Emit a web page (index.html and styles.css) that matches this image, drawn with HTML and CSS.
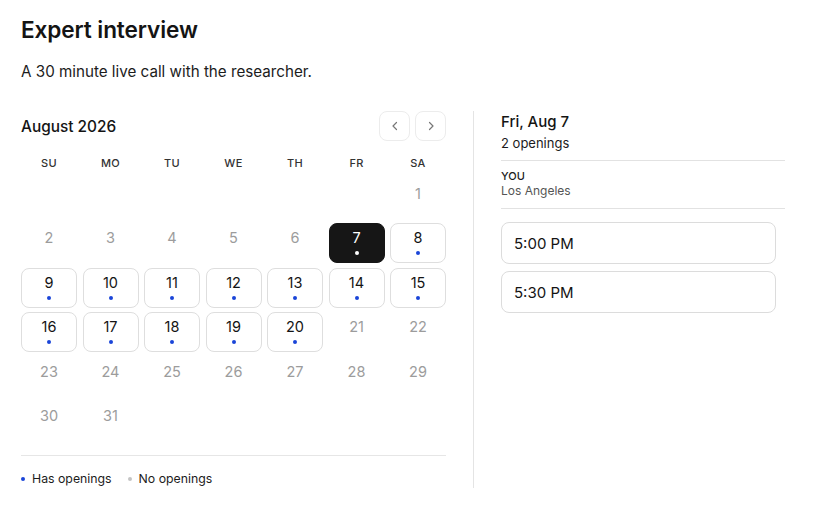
FILE: index.html
```html
<!DOCTYPE html>
<html>
<head>
<meta charset="utf-8">
<link rel="stylesheet" href="styles.css">
</head>
<body>
<div class="page">
  <h1 class="title">Expert interview</h1>
  <p class="subtitle">A 30 minute live call with the researcher.</p>
  <div class="main">
    <section class="cal">
      <div class="cal-head">
        <div class="month">August 2026</div>
        <div class="nav">
          <button class="navbtn" aria-label="Previous month"><svg width="12" height="12" viewBox="0 0 12 12"><path d="M7.5 2.5 4 6l3.5 3.5" fill="none" stroke="#777" stroke-width="1.2" stroke-linecap="round" stroke-linejoin="round"/></svg></button>
          <button class="navbtn" aria-label="Next month"><svg width="12" height="12" viewBox="0 0 12 12"><path d="M4.5 2.5 8 6l-3.5 3.5" fill="none" stroke="#777" stroke-width="1.2" stroke-linecap="round" stroke-linejoin="round"/></svg></button>
        </div>
      </div>
      <div class="weekdays">
        <span>SU</span><span>MO</span><span>TU</span><span>WE</span><span>TH</span><span>FR</span><span>SA</span>
      </div>
      <div class="grid">
        <div class="day empty"></div><div class="day empty"></div><div class="day empty"></div><div class="day empty"></div><div class="day empty"></div><div class="day empty"></div>
        <div class="day off"><span class="n">1</span></div>
        <div class="day off"><span class="n">2</span></div>
        <div class="day off"><span class="n">3</span></div>
        <div class="day off"><span class="n">4</span></div>
        <div class="day off"><span class="n">5</span></div>
        <div class="day off"><span class="n">6</span></div>
        <div class="day open selected"><span class="n">7</span><span class="dot"></span></div>
        <div class="day open"><span class="n">8</span><span class="dot"></span></div>
        <div class="day open"><span class="n">9</span><span class="dot"></span></div>
        <div class="day open"><span class="n">10</span><span class="dot"></span></div>
        <div class="day open"><span class="n">11</span><span class="dot"></span></div>
        <div class="day open"><span class="n">12</span><span class="dot"></span></div>
        <div class="day open"><span class="n">13</span><span class="dot"></span></div>
        <div class="day open"><span class="n">14</span><span class="dot"></span></div>
        <div class="day open"><span class="n">15</span><span class="dot"></span></div>
        <div class="day open"><span class="n">16</span><span class="dot"></span></div>
        <div class="day open"><span class="n">17</span><span class="dot"></span></div>
        <div class="day open"><span class="n">18</span><span class="dot"></span></div>
        <div class="day open"><span class="n">19</span><span class="dot"></span></div>
        <div class="day open"><span class="n">20</span><span class="dot"></span></div>
        <div class="day off"><span class="n">21</span></div>
        <div class="day off"><span class="n">22</span></div>
        <div class="day off"><span class="n">23</span></div>
        <div class="day off"><span class="n">24</span></div>
        <div class="day off"><span class="n">25</span></div>
        <div class="day off"><span class="n">26</span></div>
        <div class="day off"><span class="n">27</span></div>
        <div class="day off"><span class="n">28</span></div>
        <div class="day off"><span class="n">29</span></div>
        <div class="day off"><span class="n">30</span></div>
        <div class="day off"><span class="n">31</span></div>
      </div>
      <div class="legend">
        <span class="leg"><span class="ldot blue"></span>Has openings</span>
        <span class="leg"><span class="ldot grey"></span>No openings</span>
      </div>
    </section>
    <div class="divider"></div>
    <section class="side">
      <div class="date">Fri, Aug 7</div>
      <div class="count">2 openings</div>
      <div class="tz">
        <div class="tz-label">YOU</div>
        <div class="tz-city">Los Angeles</div>
      </div>
      <div class="slots">
        <button class="slot">5:00 PM</button>
        <button class="slot">5:30 PM</button>
      </div>
    </section>
  </div>
</div>
</body>
</html>
```

FILE: styles.css
```css
* { box-sizing: border-box; }
html, body { margin: 0; padding: 0; background: #fff; }
body {
  font-family: Inter, "Noto Sans", "Liberation Sans", sans-serif;
  color: #141414;
  -webkit-font-smoothing: antialiased;
}
.page { padding: 16px 21px 0 21px; width: 825px; }
.title {
  margin: 0;
  font-size: 22.6px;
  line-height: 28px;
  font-weight: 600;
  letter-spacing: -0.1px;
}
.subtitle {
  margin: 18px 0 0 0;
  font-size: 15.2px;
  line-height: 20px;
  color: #1c1c1c;
}
.main {
  display: flex;
  margin-top: 29px;
}
.cal { width: 425px; flex: none; }
.cal-head {
  display: flex;
  justify-content: space-between;
  align-items: center;
  height: 30px;
}
.month { font-size: 15.4px; font-weight: 500; padding-top: 1px; }
.nav { display: flex; gap: 5px; }
.navbtn {
  width: 31px; height: 30px;
  border: 1px solid #ececec;
  border-radius: 8px;
  background: #fff;
  display: flex; align-items: center; justify-content: center;
  padding: 0;
}
.weekdays {
  display: grid;
  grid-template-columns: repeat(7, 56px);
  column-gap: 5.5px;
  margin-top: 14px;
  font-size: 11px;
  font-weight: 500;
  line-height: 16px;
  color: #333;
  text-align: center;
  letter-spacing: 0.3px;
}
.grid {
  display: grid;
  grid-template-columns: repeat(7, 56px);
  grid-auto-rows: 40px;
  column-gap: 5.5px;
  row-gap: 4.4px;
  margin-top: 8px;
}
.day {
  border-radius: 8px;
  display: flex;
  flex-direction: column;
  align-items: center;
  padding-top: 6px;
  font-size: 14.5px;
  line-height: 18px;
}
.day .n { display: block; }
.off { color: #9c9c9c; }
.open { border: 1px solid #dedede; padding-top: 5px; color: #141414; }
.dot {
  width: 4px; height: 4px; border-radius: 50%;
  background: #1a45d8;
  margin-top: 4px;
}
.selected { background: #161616; border-color: #161616; color: #fff; }
.selected .dot { background: #fff; }
.legend {
  border-top: 1px solid #e6e6e6;
  margin-top: 14px;
  padding-top: 14px;
  display: flex;
  gap: 16px;
  font-size: 12.3px;
  line-height: 18px;
  color: #1c1c1c;
}
.leg { display: flex; align-items: center; gap: 7px; }
.ldot { width: 4px; height: 4px; border-radius: 50%; display: inline-block; }
.blue { background: #1a45d8; }
.grey { background: #c4c4c4; }
.divider {
  width: 1px;
  background: #e4e4e4;
  margin-left: 27px;
  margin-right: 27px;
  align-self: stretch;
}
.side { width: 284px; flex: none; }
.date { font-size: 15px; font-weight: 500; line-height: 22px; }
.count { font-size: 13px; line-height: 18px; color: #1c1c1c; margin-top: 1px; padding-bottom: 8px; border-bottom: 1px solid #e2e2e2; }
.tz { padding: 8px 0 9px 0; border-bottom: 1px solid #e2e2e2; }
.tz-label { font-size: 11px; font-weight: 500; line-height: 14px; color: #1c1c1c; }
.tz-city { font-size: 12px; line-height: 16px; color: #555; }
.slots { display: flex; flex-direction: column; gap: 7px; margin-top: 13px; width: 275px; }
.slot {
  height: 42px;
  border: 1px solid #dcdcdc;
  border-radius: 8px;
  background: #fff;
  text-align: left;
  padding: 0 0 0 12px;
  font-family: inherit;
  font-size: 15px;
  color: #141414;
}
```
